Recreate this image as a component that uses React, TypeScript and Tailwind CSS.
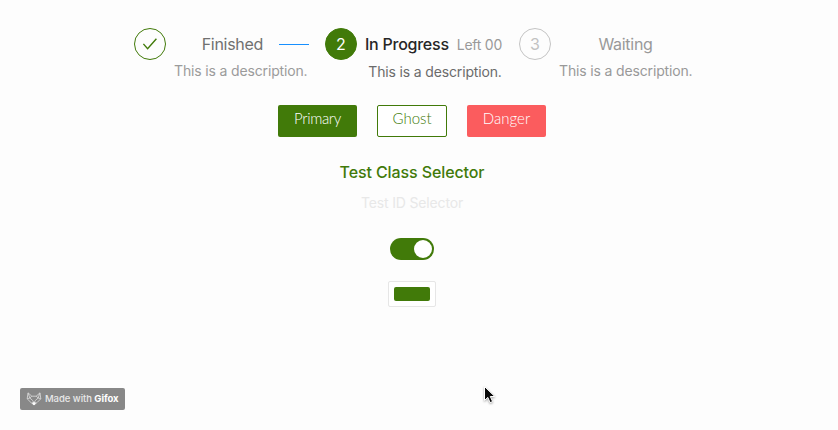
import type { ReactNode } from "react";

type StepProps = {
  icon: ReactNode;
  circle: string;
  title: ReactNode;
  description: string;
  width: string;
  titleRow: string;
  descriptionRow: string;
};

function Step({ icon, circle, title, description, width, titleRow, descriptionRow }: StepProps) {
  return (
    <div className="flex gap-2">
      <div className={`flex size-8 shrink-0 items-center justify-center rounded-full border text-base ${circle}`}>
        {icon}
      </div>
      <div className={`shrink-0 whitespace-nowrap ${width}`}>
        <div className={`flex h-8 items-center text-base ${titleRow}`}>{title}</div>
        <div className={`text-center text-sm leading-[22px] ${descriptionRow}`}>{description}</div>
      </div>
    </div>
  );
}

function CheckIcon() {
  return (
    <svg width="16" height="16" viewBox="0 0 16 16" fill="none" stroke="#417a09" strokeWidth="1.4">
      <path d="M1.4 7.9 5.6 12.7 14.4 2.8" />
    </svg>
  );
}

function FoxLogo() {
  return (
    <svg width="16" height="14" viewBox="0 0 16 14" fill="none" stroke="#dedede" strokeWidth="0.8" strokeLinejoin="round">
      <path d="M2 .8 5.8 4.2h4.4L14 .8l.8 6L11 10.6 8 13 5 10.6 1.2 6.8z" />
      <path d="M2.2 1.2 3.8 6 1.2 6.8M13.8 1.2 12.2 6l2.6.8M3.8 6l2-1.8M12.2 6l-2-1.8M3.8 6 6.6 8.4 8 11M12.2 6 9.4 8.4 8 11" />
      <path d="M6.4 10.8h3.2L8 13z" fill="#fff" stroke="#fff" />
    </svg>
  );
}

function Pointer() {
  return (
    <svg
      className="absolute left-[483px] top-[385px] drop-shadow-[0_1px_1px_rgba(0,0,0,0.35)]"
      width="13"
      height="20"
      viewBox="0 0 13 20"
    >
      <path d="M1.5 1.5v14l3.3-3.1 2.3 5.2 2.5-1-2.3-5.1h4.5z" fill="#080808" stroke="#fff" strokeWidth="1" />
    </svg>
  );
}

const buttonText = "font-['Lato',sans-serif] font-light text-[15px]";

export default function App() {
  return (
    <main className="relative flex h-[430px] w-[838px] flex-col overflow-hidden bg-[#fdfdfd] font-['Inter',sans-serif]">
      <div className="flex h-[105px] pl-[134px] pt-7">
        <Step
          icon={<CheckIcon />}
          circle="border-[#417a09]"
          width="w-[135px] mr-4"
          titleRow="justify-end gap-4 text-[#707070] font-normal tracking-[-0.3px]"
          descriptionRow="w-[133px] text-[#9b9b9b] tracking-[-0.15px]"
          description="This is a description."
          title={
            <>
              <span>Finished</span>
              <span className="h-px w-[30px] bg-[#1890ff]" />
            </>
          }
        />
        <Step
          icon="2"
          circle="border-[#417a09] bg-[#417a09] text-white"
          width="w-[140px] mr-[14px]"
          titleRow="gap-2 text-[#262626] font-medium tracking-[-0.25px]"
          descriptionRow="pt-px text-[#6b6b6b] tracking-[-0.15px]"
          description="This is a description."
          title={
            <>
              <span>In Progress</span>
              <span className="pt-0.5 text-sm font-normal text-[#999999]">Left 00</span>
            </>
          }
        />
        <Step
          icon="3"
          circle="border-[#c4c4c4] text-[#c2c2c2]"
          width="w-[133px]"
          titleRow="justify-center text-[#999999] tracking-[-0.3px]"
          descriptionRow="text-[#999999] tracking-[-0.15px]"
          description="This is a description."
          title="Waiting"
        />
      </div>

      <div className="ml-[278px] flex gap-5">
        <button className={`flex h-8 w-[79px] items-start justify-center rounded-xs bg-[#417a09] pt-0.5 tracking-[-0.35px] text-white ${buttonText}`}>
          Primary
        </button>
        <button className={`flex h-8 w-[70px] items-start justify-center rounded-xs border border-[#417a09] bg-white pt-px text-[#417a09] ${buttonText}`}>
          Ghost
        </button>
        <button className={`flex h-8 w-[79px] items-start justify-center rounded-xs bg-[#fb5c5e] pt-0.5 text-white ${buttonText}`}>
          Danger
        </button>
      </div>

      <div className="flex w-[824px] flex-col items-center">
        <h2 className="mt-[23px] text-base font-medium leading-6 tracking-[-0.1px] text-[#417a09]">Test Class Selector</h2>
        <p className="mt-2 text-sm leading-[22px] tracking-[-0.15px] text-[#e8e8e8]">Test ID Selector</p>
        <div className="mt-6 flex h-[22px] w-11 items-center justify-end rounded-full bg-[#417a09] pr-0.5">
          <span className="size-[18px] rounded-full bg-white" />
        </div>
        <div className="mt-[21px] flex h-[26px] w-12 items-center justify-center rounded-xs border border-[#e6e6e6] bg-white">
          <span className="h-3.5 w-9 rounded-xs bg-[#417a09]" />
        </div>
      </div>

      <div className="ml-5 mt-[81px] flex h-[22px] w-[105px] items-center gap-[3px] rounded-xs bg-[#888888] pl-1.5 text-[9.5px] text-[#e8e8e8]">
        <FoxLogo />
        <span className="whitespace-nowrap font-medium tracking-[-0.05px]">
          Made with <b className="font-bold text-white">Gifox</b>
        </span>
      </div>

      <Pointer />
    </main>
  );
}
